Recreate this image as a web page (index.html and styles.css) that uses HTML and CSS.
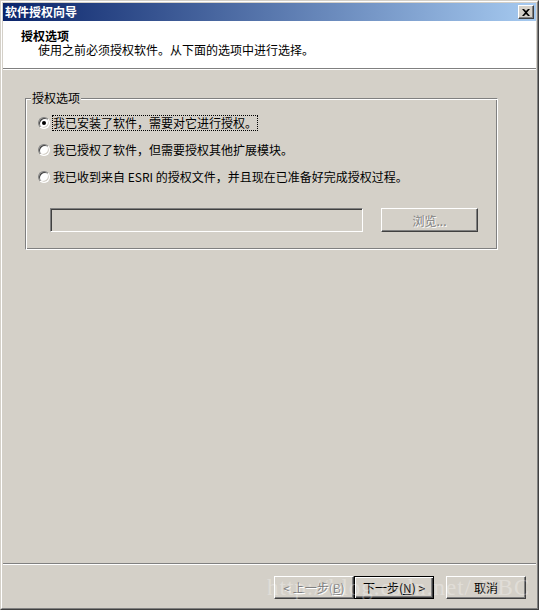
FILE: index.html
```html
<!DOCTYPE html>
<html lang="zh-CN">
<head>
<meta charset="utf-8">
<title>软件授权向导</title>
<link rel="stylesheet" href="styles.css">
</head>
<body>
<div class="window">
  <div class="frame">
    <div class="titlebar">
      <span class="title-text">软件授权向导</span>
      <button class="close-btn" aria-label="关闭">
        <svg width="8" height="7" viewBox="0 0 8 7"><path d="M0 0h2l2 2 2-2h2L5 3.5 8 7H6L4 5 2 7H0l3-3.5z" fill="#000"/></svg>
      </button>
    </div>
    <div class="header">
      <div class="header-title">授权选项</div>
      <div class="header-sub">使用之前必须授权软件。从下面的选项中进行选择。</div>
    </div>
    <div class="sep"></div>
    <div class="body">
      <fieldset class="group">
        <legend class="group-label">授权选项</legend>
        <div class="options">
          <div class="option">
            <span class="radio checked"></span>
            <span class="option-text focused">我已安装了软件，需要对它进行授权。</span>
          </div>
          <div class="option">
            <span class="radio"></span>
            <span class="option-text">我已授权了软件，但需要授权其他扩展模块。</span>
          </div>
          <div class="option">
            <span class="radio"></span>
            <span class="option-text">我已收到来自 ESRI 的授权文件，并且现在已准备好完成授权过程。</span>
          </div>
        </div>
        <div class="file-row">
          <div class="file-input"></div>
          <div class="browse-btn"><span class="disabled-text">浏览...</span></div>
        </div>
      </fieldset>
    </div>
    <div class="sep"></div>
    <div class="footer">
      <div class="btn"><span class="disabled-text">&lt; 上一步(<u>B</u>)</span></div>
      <div class="btn default">下一步(<u>N</u>) &gt;</div>
      <div class="btn cancel">取消</div>
    </div>
  </div>
  <div class="watermark">http://blog.csdn.net/<span class="wm-gap"></span>DBC</div>
</div>
</body>
</html>
```

FILE: styles.css
```css
* { box-sizing: border-box; }
html, body { margin: 0; padding: 0; }
body {
  width: 539px;
  height: 610px;
  font-family: "Noto Sans CJK SC", "Liberation Sans", sans-serif;
  font-size: 12px;
  color: #000;
  background: #d4d0c8;
}
.window {
  position: relative;
  width: 539px;
  height: 610px;
  border: 1px solid;
  border-color: #d4d0c8 #404040 #404040 #d4d0c8;
}
.frame {
  height: 100%;
  border: 1px solid;
  border-color: #fff #808080 #808080 #fff;
  padding: 1px;
  display: flex;
  flex-direction: column;
  background: #d4d0c8;
}
.titlebar {
  height: 18px;
  flex: none;
  display: flex;
  align-items: center;
  justify-content: space-between;
  padding: 0 2px 0 2px;
  background: linear-gradient(to right, #0a246a, #a6caf0);
}
.title-text {
  color: #fff;
  font-weight: bold;
  font-size: 12px;
  line-height: 14px;
}
.close-btn {
  width: 16px;
  height: 14px;
  padding: 0;
  margin: 0;
  display: flex;
  align-items: center;
  justify-content: center;
  background: #d4d0c8;
  border: 1px solid;
  border-color: #fff #404040 #404040 #fff;
  box-shadow: inset -1px -1px #808080;
}
.header {
  flex: none;
  height: 47px;
  background: #fff;
  padding: 8px 0 0 18px;
}
.header-title {
  font-weight: bold;
  line-height: 14px;
}
.header-sub {
  margin-left: 17px;
  line-height: 14px;
}
.sep {
  flex: none;
  height: 2px;
  border-top: 1px solid #808080;
  border-bottom: 1px solid #fff;
}
.body {
  flex: 1;
  padding: 21px 38px 0 22px;
}
.group {
  margin: 0;
  padding: 0 0 17px 0;
  min-width: 0;
  border: 1px solid;
  border-color: #808080 #fff #fff #808080;
  box-shadow: inset 1px 1px #fff, inset -1px -1px #808080;
}
.group-label {
  margin-left: 5px;
  padding: 0 1px;
  line-height: 14px;
  background: #d4d0c8;
}
.options {
  display: flex;
  flex-direction: column;
  gap: 11px;
  padding: 10px 0 0 12px;
}
.option {
  display: flex;
  align-items: center;
  height: 16px;
}
.radio {
  position: relative;
  width: 12px;
  height: 12px;
  border-radius: 50%;
  border: 1px solid;
  border-color: #808080 #fff #fff #808080;
  background: #fff;
  box-shadow: inset 1px 1px #404040, inset -1px -1px #d4d0c8;
  margin-right: 2px;
  flex: none;
}
.radio.checked::after {
  content: "";
  position: absolute;
  left: 3px;
  top: 3px;
  width: 4px;
  height: 4px;
  border-radius: 50%;
  background: #000;
}
.option-text {
  border: 1px dotted transparent;
  line-height: 14px;
  white-space: nowrap;
}
.option-text.focused {
  border-color: #000;
}
.file-row {
  display: flex;
  margin: 23px 0 0 24px;
}
.file-input {
  width: 313px;
  height: 24px;
  border: 1px solid;
  border-color: #808080 #fff #fff #808080;
  box-shadow: inset 1px 1px #404040, inset -1px -1px #d4d0c8;
  background: #d4d0c8;
}
.browse-btn {
  width: 97px;
  height: 24px;
  margin-left: 18px;
  display: flex;
  align-items: center;
  justify-content: center;
  border: 1px solid;
  border-color: #fff #404040 #404040 #fff;
  box-shadow: inset -1px -1px #808080;
}
.disabled-text {
  color: #808080;
  text-shadow: 1px 1px #fff;
}
.footer {
  flex: none;
  height: 42px;
  display: flex;
  justify-content: flex-end;
  align-items: flex-start;
  padding: 11px 10px 0 0;
}
.btn {
  width: 80px;
  height: 23px;
  display: flex;
  align-items: center;
  justify-content: center;
  border: 1px solid;
  border-color: #fff #404040 #404040 #fff;
  box-shadow: inset -1px -1px #808080;
  line-height: 14px;
  white-space: nowrap;
}
.btn.default {
  border: 1px solid #000;
  box-shadow: inset 1px 1px #fff, inset -1px -1px #404040, inset -2px -2px #808080;
}
.btn.cancel {
  margin-left: 12px;
}
.watermark {
  position: absolute;
  left: 266px;
  top: 574px;
  font-family: "Liberation Serif", serif;
  font-size: 23px;
  letter-spacing: 1px;
  color: rgba(255, 255, 255, 0.3);
  white-space: nowrap;
  pointer-events: none;
}
.wm-gap {
  display: inline-block;
  width: 8px;
}
```
